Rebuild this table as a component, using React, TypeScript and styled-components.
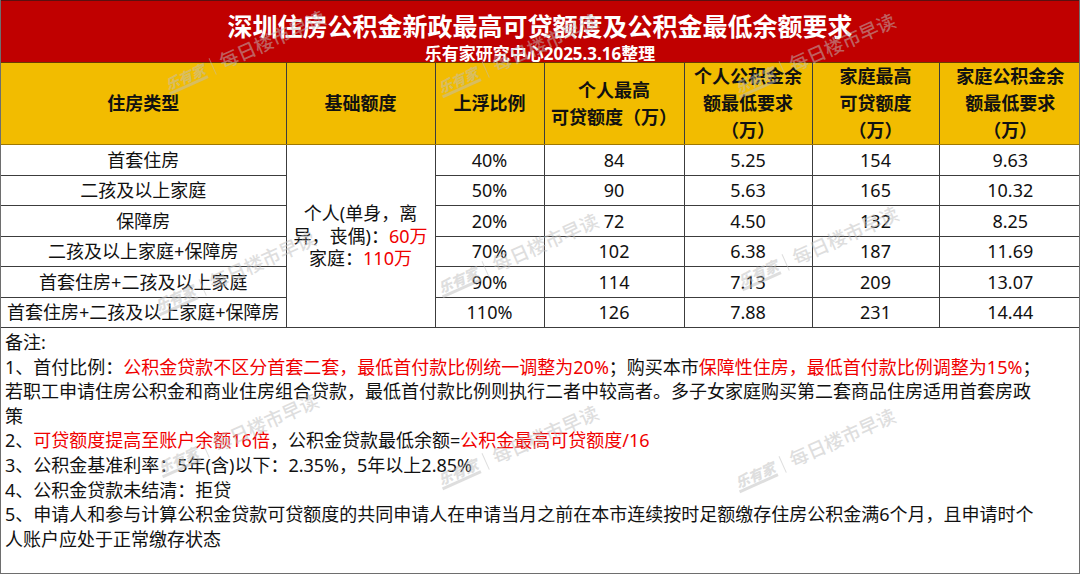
import React from 'react'
import styled, { createGlobalStyle } from 'styled-components'

const GlobalStyle = createGlobalStyle`
  html, body {
    margin: 0;
    padding: 0;
    background: #ffffff;
  }

  body {
    font-family: 'Noto Sans', 'Noto Sans CJK SC', sans-serif;
    color: #111111;
  }
`

const Sheet = styled.div`
  position: relative;
  width: 1080px;
  height: 574px;
  box-sizing: border-box;
  border: 1px solid #6e6e6e;
  border-top: none;
  overflow: hidden;
  display: flex;
  flex-direction: column;
`

const TitleBar = styled.header`
  height: 63px;
  box-sizing: border-box;
  padding-top: 11px;
  background: #c00000;
  color: #ffffff;
  display: flex;
  flex-direction: column;
  align-items: center;
  gap: 6px;
  border-top: 1px solid #5a1010;
  border-bottom: 1px solid #6a3a00;
  flex-shrink: 0;
`

const Title = styled.h1`
  margin: 0;
  font-size: 25px;
  line-height: 28px;
  font-weight: 700;
`

const Subtitle = styled.p`
  margin: 0;
  font-size: 17px;
  line-height: 16px;
  font-weight: 700;
`

const Table = styled.table`
  width: 100%;
  table-layout: fixed;
  border-collapse: collapse;
  flex-shrink: 0;
`

const HeadCell = styled.th`
  height: 77px;
  box-sizing: border-box;
  padding: 0 2px;
  background: #f2bc00;
  font-size: 18px;
  line-height: 27px;
  font-weight: 700;
  text-align: center;
  vertical-align: middle;
  border-left: 1px solid #3c3c3c;
  border-bottom: 1px solid #a07800;

  &:first-child {
    border-left: none;
  }
`

const Row = styled.tr`
  height: 30.5px;
`

const Cell = styled.td<{ $merged?: boolean }>`
  padding: 0;
  font-size: 18px;
  line-height: ${p => (p.$merged ? '22.5px' : '24px')};
  text-align: center;
  vertical-align: middle;
  white-space: nowrap;
  border-left: 1px solid #3c3c3c;
  border-bottom: 1px solid #3c3c3c;

  &:first-child {
    border-left: none;
  }
`

const Red = styled.span`
  color: #f00000;
`

const Notes = styled.section`
  flex: 1;
  padding: 2px 4px 0;
  font-size: 18px;
  line-height: 24.6px;
  color: #111111;
`

const NoteLine = styled.p`
  margin: 0;
`

const Watermark = styled.div<{ $x: number; $y: number }>`
  position: absolute;
  left: ${p => p.$x}px;
  top: ${p => p.$y - 22}px;
  height: 22px;
  display: flex;
  align-items: center;
  gap: 8px;
  transform: rotate(-24deg);
  transform-origin: left bottom;
  color: rgba(190, 190, 190, 0.5);
  font-size: 19px;
  line-height: 22px;
  font-weight: 500;
  white-space: nowrap;
  pointer-events: none;
`

const WatermarkLogo = styled.span`
  font-size: 14px;
  font-weight: 900;
  font-style: italic;
  border-bottom: 3px solid rgba(190, 190, 190, 0.5);
  line-height: 14px;
`

const WatermarkBar = styled.span`
  width: 1px;
  height: 18px;
  background: rgba(190, 190, 190, 0.5);
`

const rows = [
  { type: '首套住房', rate: '40%', person: '84', personMin: '5.25', family: '154', familyMin: '9.63' },
  { type: '二孩及以上家庭', rate: '50%', person: '90', personMin: '5.63', family: '165', familyMin: '10.32' },
  { type: '保障房', rate: '20%', person: '72', personMin: '4.50', family: '132', familyMin: '8.25' },
  { type: '二孩及以上家庭+保障房', rate: '70%', person: '102', personMin: '6.38', family: '187', familyMin: '11.69' },
  { type: '首套住房+二孩及以上家庭', rate: '90%', person: '114', personMin: '7.13', family: '209', familyMin: '13.07' },
  { type: '首套住房+二孩及以上家庭+保障房', rate: '110%', person: '126', personMin: '7.88', family: '231', familyMin: '14.44' }
]

const marks = [
  [170, 97], [443, 100], [740, 100],
  [160, 318], [443, 300], [743, 293],
  [163, 480], [443, 492], [740, 495]
]

export default function App() {
  return (
    <Sheet>
      <GlobalStyle />
      <TitleBar>
        <Title>深圳住房公积金新政最高可贷额度及公积金最低余额要求</Title>
        <Subtitle>乐有家研究中心2025.3.16整理</Subtitle>
      </TitleBar>

      <Table>
        <colgroup>
          <col style={{ width: 285 }} />
          <col style={{ width: 149 }} />
          <col style={{ width: 109 }} />
          <col style={{ width: 140 }} />
          <col style={{ width: 128 }} />
          <col style={{ width: 127 }} />
          <col style={{ width: 142 }} />
        </colgroup>
        <thead>
          <tr>
            <HeadCell>住房类型</HeadCell>
            <HeadCell>基础额度</HeadCell>
            <HeadCell>上浮比例</HeadCell>
            <HeadCell>
              个人最高
              <br />
              可贷额度（万）
            </HeadCell>
            <HeadCell>
              个人公积金余
              <br />
              额最低要求
              <br />
              （万）
            </HeadCell>
            <HeadCell>
              家庭最高
              <br />
              可贷额度
              <br />
              （万）
            </HeadCell>
            <HeadCell>
              家庭公积金余
              <br />
              额最低要求
              <br />
              （万）
            </HeadCell>
          </tr>
        </thead>
        <tbody>
          {rows.map((row, index) => (
            <Row key={row.type}>
              <Cell>{row.type}</Cell>
              {index === 0 && (
                <Cell $merged rowSpan={rows.length}>
                  个人(单身，离
                  <br />
                  异，丧偶)：<Red>60万</Red>
                  <br />
                  家庭：<Red>110万</Red>
                </Cell>
              )}
              <Cell>{row.rate}</Cell>
              <Cell>{row.person}</Cell>
              <Cell>{row.personMin}</Cell>
              <Cell>{row.family}</Cell>
              <Cell>{row.familyMin}</Cell>
            </Row>
          ))}
        </tbody>
      </Table>

      <Notes>
        <NoteLine>备注:</NoteLine>
        <NoteLine>
          1、首付比例：<Red>公积金贷款不区分首套二套，最低首付款比例统一调整为20%</Red>；购买本市
          <Red>保障性住房，最低首付款比例调整为15%</Red>；
        </NoteLine>
        <NoteLine>
          若职工申请住房公积金和商业住房组合贷款，最低首付款比例则执行二者中较高者。多子女家庭购买第二套商品住房适用首套房政
        </NoteLine>
        <NoteLine>策</NoteLine>
        <NoteLine>
          2、<Red>可贷额度提高至账户余额16倍</Red>，公积金贷款最低余额=<Red>公积金最高可贷额度/16</Red>
        </NoteLine>
        <NoteLine>3、公积金基准利率：5年(含)以下：2.35%，5年以上2.85%</NoteLine>
        <NoteLine>4、公积金贷款未结清：拒贷</NoteLine>
        <NoteLine>
          5、申请人和参与计算公积金贷款可贷额度的共同申请人在申请当月之前在本市连续按时足额缴存住房公积金满6个月，且申请时个
        </NoteLine>
        <NoteLine>人账户应处于正常缴存状态</NoteLine>
      </Notes>

      {marks.map(([x, y]) => (
        <Watermark key={`${x}-${y}`} $x={x} $y={y}>
          <WatermarkLogo>乐有家</WatermarkLogo>
          <WatermarkBar />
          每日楼市早读
        </Watermark>
      ))}
    </Sheet>
  )
}
